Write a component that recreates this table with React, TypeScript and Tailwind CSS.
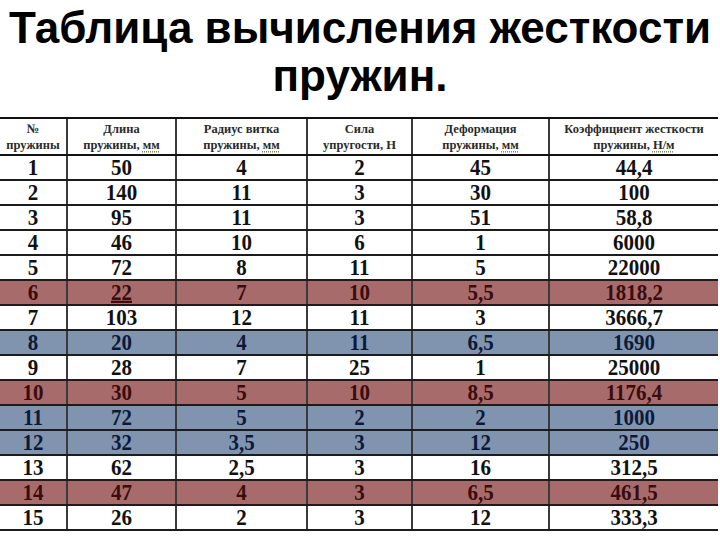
const header = [
  ['№', 'пружины'],
  ['Длина', 'пружины, мм'],
  ['Радиус витка', 'пружины, мм'],
  ['Сила', 'упругости, Н'],
  ['Деформация', 'пружины, мм'],
  ['Коэффициент жесткости', 'пружины, Н/м'],
]

const rows: { cells: string[]; tone?: 'red' | 'blue' }[] = [
  { cells: ['1', '50', '4', '2', '45', '44,4'] },
  { cells: ['2', '140', '11', '3', '30', '100'] },
  { cells: ['3', '95', '11', '3', '51', '58,8'] },
  { cells: ['4', '46', '10', '6', '1', '6000'] },
  { cells: ['5', '72', '8', '11', '5', '22000'] },
  { cells: ['6', '22', '7', '10', '5,5', '1818,2'], tone: 'red' },
  { cells: ['7', '103', '12', '11', '3', '3666,7'] },
  { cells: ['8', '20', '4', '11', '6,5', '1690'], tone: 'blue' },
  { cells: ['9', '28', '7', '25', '1', '25000'] },
  { cells: ['10', '30', '5', '10', '8,5', '1176,4'], tone: 'red' },
  { cells: ['11', '72', '5', '2', '2', '1000'], tone: 'blue' },
  { cells: ['12', '32', '3,5', '3', '12', '250'], tone: 'blue' },
  { cells: ['13', '62', '2,5', '3', '16', '312,5'] },
  { cells: ['14', '47', '4', '3', '6,5', '461,5'], tone: 'red' },
  { cells: ['15', '26', '2', '3', '12', '333,3'] },
]

const cols = 'grid grid-cols-[68px_109px_131px_105px_137px_168px]'

function HeaderLine({ text }: { text: string }) {
  // the units carry the word-processor spellcheck underline
  const m = text.match(/^(.*, )(мм|Н\/м)$/)
  if (!m) return <span>{text}</span>
  return (
    <span>
      {m[1]}
      <span className="underline decoration-[#5d7a3a] decoration-dotted underline-offset-2">{m[2]}</span>
    </span>
  )
}

export default function App() {
  return (
    <div className="w-[720px] h-[540px] bg-white overflow-hidden">
      <h1 className="pt-[4px] text-center text-[44px] leading-[48px] font-bold text-black font-['Liberation_Sans',Arial,sans-serif]">
        Таблица вычисления жесткости
        <br />
        пружин.
      </h1>

      <div className="mt-[17px] w-[718px] border-t-2 border-[#111] font-['Liberation_Serif','Times_New_Roman',serif]">
        <div className={`${cols} h-[37px] border-b-2 border-[#111]`}>
          {header.map((h, i) => (
            <div
              key={i}
              className={`flex flex-col items-center justify-center text-[12.5px] leading-[16px] font-semibold text-[#2a2a2a] whitespace-nowrap ${
                i < 5 ? 'border-r-2 border-[#3a3a3a]' : ''
              }`}
            >
              <span className="inline-block scale-y-105">{h[0]}</span>
              <span className="inline-block scale-y-105">
                <HeaderLine text={h[1]} />
              </span>
            </div>
          ))}
        </div>

        {rows.map((r, ri) => {
          const bg = r.tone === 'red' ? 'bg-[#a76b6b]' : r.tone === 'blue' ? 'bg-[#8094b0]' : 'bg-white'
          const fg = r.tone === 'red' ? 'text-[#3a0c0c]' : r.tone === 'blue' ? 'text-[#0c1a3a]' : 'text-[#111]'
          return (
            <div key={ri} className={`${cols} h-[25px] border-b-2 border-[#1c1c1c] ${bg} ${fg}`}>
              {r.cells.map((c, ci) => (
                <div
                  key={ci}
                  className={`flex items-center justify-center text-[21px] leading-none font-bold ${
                    ci < 5 ? 'border-r-2 border-[#3a3a3a]' : ''
                  }`}
                >
                  <span className={`inline-block scale-y-[1.1] ${ri === 5 && ci === 1 ? 'underline underline-offset-1' : ''}`}>
                    {c}
                  </span>
                </div>
              ))}
            </div>
          )
        })}
      </div>
    </div>
  )
}
